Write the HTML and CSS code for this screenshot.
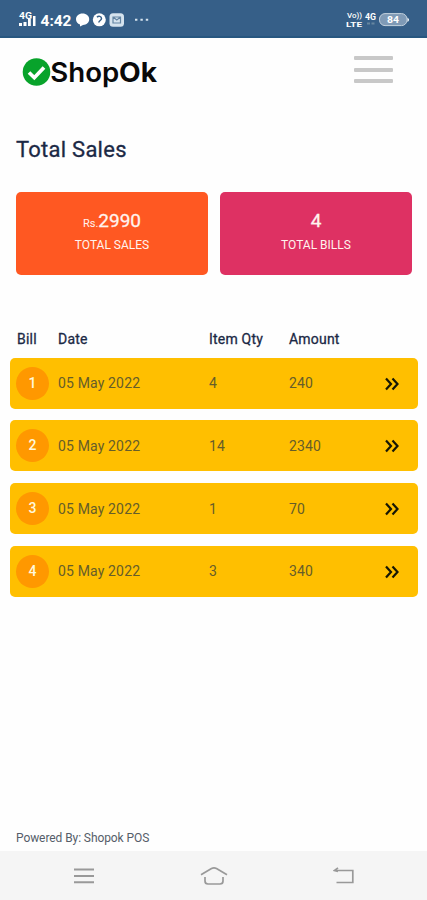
FILE: index.html
```html
<!DOCTYPE html>
<html lang="en">
<head>
<meta charset="utf-8">
<title>ShopOk</title>
<link rel="stylesheet" href="styles.css">
</head>
<body>
<div class="status">
  <svg class="status-left" width="140" height="20" viewBox="0 0 140 20" fill="#fff">
    <text x="1" y="8.500" font-size="9" font-weight="700" textLength="13" lengthAdjust="spacingAndGlyphs">4G</text>
    <path d="M1 13h3v3H1zM5.500 12h3v4h-3zM10 9h2.800v7H10zM15 6h2.500v10H15z"/>
    <text x="22.500" y="15.500" font-size="15.500" font-weight="700" textLength="31" lengthAdjust="spacingAndGlyphs">4:42</text>
    <path d="M64.500 3.500c4 0 6.700 2.500 6.700 5.800s-2.700 5.700-6.200 5.700l-3 1.500v-2c-2.500-.8-4-2.800-4-5.200 0-3.300 2.700-5.800 6.500-5.800z"/>
    <circle cx="81.300" cy="9.800" r="6.500"/>
    <path d="M79 7.300c1.500-1.800 4.500-1 4.500 1.200 0 2-2.500 2-2.700 4" fill="none" stroke="#365f88" stroke-width="1.500"/>
    <rect x="91.500" y="3.300" width="14.500" height="13.500" rx="3.500" fill="#d5e3ee"/>
    <path d="M95 7l3.800 3L102.500 7M95 7h7.500v6H95z" fill="none" stroke="#6485a3" stroke-width="1.200"/>
    <path d="M117 8.800h2.400v2H117zM122.400 8.800h2.400v2h-2.400zM127.800 8.800h2.400v2h-2.400z" fill="#d5e3ee"/>
  </svg>
  <svg class="status-right" width="66" height="20" viewBox="0 0 66 20" fill="#fff">
    <text x="1" y="8" font-size="7" font-weight="500" textLength="15" lengthAdjust="spacingAndGlyphs">Vo))</text>
    <text x="0" y="16.800" font-size="8" font-weight="700" textLength="16" lengthAdjust="spacingAndGlyphs">LTE</text>
    <text x="19" y="9.500" font-size="8.500" font-weight="700" textLength="11" lengthAdjust="spacingAndGlyphs">4G</text>
    <path d="M21 12.500h3v2h-3zM25.500 12.500h3v2h-3z" fill="#66869f"/>
    <rect x="33.500" y="3.600" width="27.500" height="12" rx="5.500" fill="#7f9ab6" stroke="#c3d1dd"/>
    <path d="M61.500 7.500q3 2.300 0 4.600z"/>
    <text x="41" y="13.300" font-size="9.500" font-weight="700" textLength="12" lengthAdjust="spacingAndGlyphs">84</text>
  </svg>
</div>
<header class="header">
  <svg class="logo" width="138" height="34" viewBox="0 0 138 34">
    <circle cx="14.500" cy="17" r="13.800" fill="#08a32b"/>
    <path d="M7 17.500l5.300 5.200L22 12.500" fill="none" stroke="#fff" stroke-width="3.700"/>
    <text class="brand" x="28.300" y="27.300" font-size="26.500" font-weight="600" textLength="69" lengthAdjust="spacingAndGlyphs">Shop</text>
    <text class="brand" x="97" y="27.300" font-size="27" font-weight="700" textLength="38" lengthAdjust="spacingAndGlyphs">Ok</text>
  </svg>
  <div class="menu"><i></i><i></i><i></i></div>
</header>
<main class="main">
  <h1>Total Sales</h1>
  <section class="cards">
    <div class="card sales"><div class="value"><small>Rs.</small>2990</div><div class="label">TOTAL SALES</div></div>
    <div class="card bills"><div class="value">4</div><div class="label">TOTAL BILLS</div></div>
  </section>
  <section class="table">
    <div class="grid head"><span>Bill</span><span>Date</span><span>Item Qty</span><span>Amount</span></div>
    <div class="grid row"><b>1</b><span>05 May 2022</span><span>4</span><span>240</span><svg width="16" height="14" viewBox="0 0 16 14"><path d="M2 1.500L7 7l-5 5.500M8.500 1.500l5 5.500-5 5.500"/></svg></div>
    <div class="grid row"><b>2</b><span>05 May 2022</span><span>14</span><span>2340</span><svg width="16" height="14" viewBox="0 0 16 14"><path d="M2 1.500L7 7l-5 5.500M8.500 1.500l5 5.500-5 5.500"/></svg></div>
    <div class="grid row"><b>3</b><span>05 May 2022</span><span>1</span><span>70</span><svg width="16" height="14" viewBox="0 0 16 14"><path d="M2 1.500L7 7l-5 5.500M8.500 1.500l5 5.500-5 5.500"/></svg></div>
    <div class="grid row"><b>4</b><span>05 May 2022</span><span>3</span><span>340</span><svg width="16" height="14" viewBox="0 0 16 14"><path d="M2 1.500L7 7l-5 5.500M8.500 1.500l5 5.500-5 5.500"/></svg></div>
  </section>
</main>
<footer class="powered">Powered By: Shopok POS</footer>
<nav class="nav">
  <svg width="22" height="20" viewBox="0 0 22 20"><path d="M1 3.500h20M1 10h20M1 16.300h20" stroke-width="1.900"/></svg>
  <svg width="30" height="20" viewBox="0 0 30 20"><path d="M2 8.700L12.500 2.500q2.500-1.300 5 0L28 8.700M6 11v4q0 3 3 3h12q3 0 3-3v-4"/></svg>
  <svg width="22" height="20" viewBox="0 0 22 20"><path d="M1.500 4.500h18.300V16.500H3.500M5 1.800L1.500 4.500 5 5.500"/></svg>
</nav>
</body>
</html>
```
FILE: styles.css
```css
* { box-sizing: border-box; }
body {
  margin: 0;
  height: 900px;
  display: flex;
  flex-direction: column;
  overflow: hidden;
  background: #fefefe;
  color: #1b2945;
  font-family: Roboto, "Liberation Sans", sans-serif;
}
svg { display: block; flex: none; }
.status {
  height: 38px;
  padding: 10px 15px 0 18px;
  display: flex;
  justify-content: space-between;
  background: #365f88;
  border-bottom: 2px solid #285780;
}
.header {
  height: 87px;
  padding: 17px 34px 0 22px;
  display: flex;
  justify-content: space-between;
}
.brand { font-family: Inter, sans-serif; fill: #090909; }
.menu {
  width: 39px;
  height: 27px;
  margin-top: 1px;
  display: flex;
  flex-direction: column;
  justify-content: space-between;
}
.menu i { height: 4px; background: #c8c8c8; border-radius: 1px; }
.main { flex: 1; }
h1 {
  margin: 11px 16px 0;
  font-size: 22px;
  line-height: 28px;
  font-weight: 400;
  letter-spacing: 0.25px;
  -webkit-text-stroke: 0.3px;
}
.cards {
  margin: 28px 15px 0 16px;
  display: grid;
  grid-template-columns: 1fr 1fr;
  gap: 12px;
}
.card {
  height: 83px;
  padding-top: 16px;
  border-radius: 5px;
  text-align: center;
  color: #fff3ee;
}
.sales { background: #ff5822; }
.bills { background: #de3163; }
.value {
  height: 25px;
  display: flex;
  justify-content: center;
  align-items: baseline;
  font-size: 19px;
  line-height: 25px;
  -webkit-text-stroke: 0.3px;
}
.value small { font-size: 11px; -webkit-text-stroke: 0; }
.label { margin-top: 4px; font-size: 12px; line-height: 17px; }
.table { margin: 50px 9px 0 10px; }
.grid {
  display: grid;
  grid-template-columns: 42px 151px 80px 95px 1fr;
  padding-left: 6px;
  align-items: center;
  font-size: 14px;
}
.head {
  height: 27px;
  margin-bottom: 5.500px;
  letter-spacing: 0.2px;
  -webkit-text-stroke: 0.3px;
}
.head span:first-child { padding-left: 1px; }
.row {
  height: 51px;
  margin-bottom: 11.800px;
  border-radius: 5px;
  background: #ffbf00;
  color: #665d2a;
  letter-spacing: 0.15px;
}
.row b {
  width: 33px;
  height: 33px;
  border-radius: 50%;
  background: #ff9800;
  color: #fff8dc;
  line-height: 33px;
  text-align: center;
  font-weight: 500;
}
.row svg { fill: none; stroke: #171705; stroke-width: 2.200; margin-top: 1px; }
.powered {
  height: 25px;
  padding-left: 16px;
  font-size: 12px;
  line-height: 25px;
  letter-spacing: -0.080px;
  color: #555d69;
}
.nav {
  height: 49px;
  padding: 0 72px 0 73px;
  display: flex;
  justify-content: space-between;
  align-items: center;
  background: #f5f5f5;
}
.nav svg { fill: none; stroke: #999; stroke-width: 1.700; }
```
